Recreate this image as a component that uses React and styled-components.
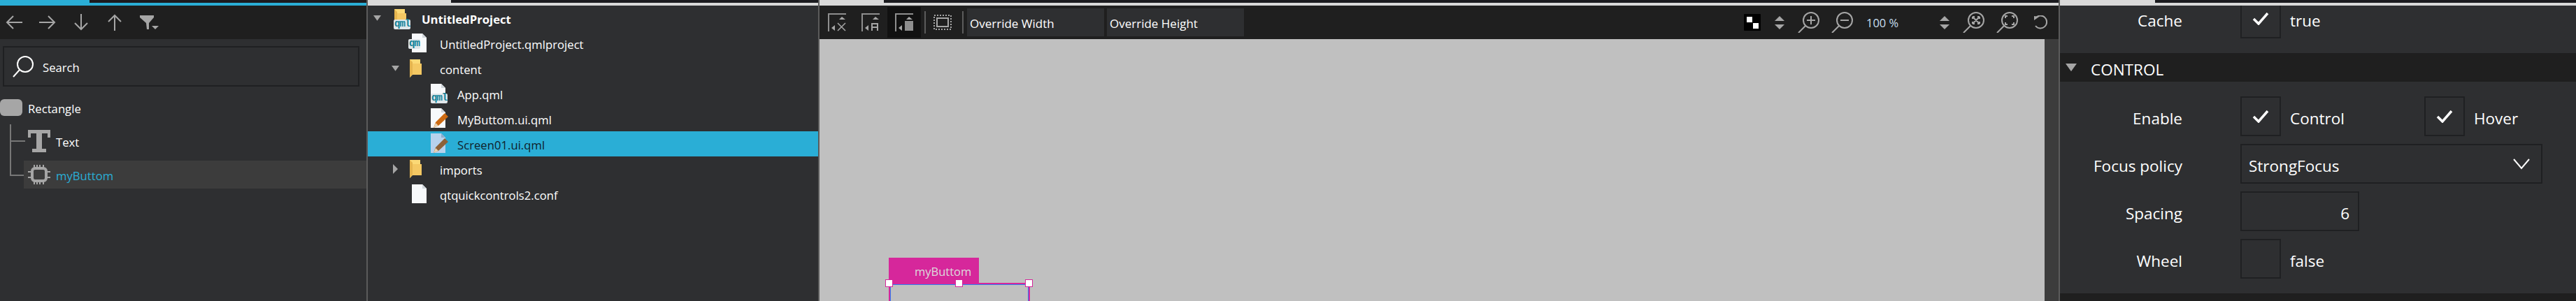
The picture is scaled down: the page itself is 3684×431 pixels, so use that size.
import React from 'react';
import styled, { createGlobalStyle } from 'styled-components';

const Global = createGlobalStyle`
  html, body { margin: 0; padding: 0; background: #2e2f31; overflow: hidden; }
  * { box-sizing: border-box; }
`;
const Shell = styled.div`
  display: flex; width: 3684px; height: 431px; overflow: hidden;
  font-family: "Open Sans", "Noto Sans", sans-serif; color: #fff; background: #2e2f31;
`;
const Panel = styled.section`
  flex: ${p => p.$width ? `0 0 ${p.$width}px` : '1'};
  display: flex; flex-direction: column; min-width: 0; height: 431px; overflow: hidden;
  border-right: ${p => p.$noBorder ? 'none' : '2px solid #5b5b5b'};
`;
const TabStrip = styled.div`
  flex: 0 0 8px; background: #1b1b1f; border-bottom: 4px solid ${p => p.$color};
`;
const Tab = styled.div`
  height: 4px; width: ${p => p.$width}px; background: ${p => p.$color};
`;
const NavToolbar = styled.div`
  flex: 0 0 48px; display: flex; align-items: center; gap: 24px; padding-left: 8px; background: #1f1f1f;
`;
const SearchBox = styled.div`
  height: 58px; width: 510px; margin: 10px 0 0 4px; border: 2px solid #1f2022;
  display: flex; align-items: center; gap: 11px; padding-left: 12px; font-size: 16.7px;
`;
const TreeLabel = styled.span`padding-top: 3px;`;
const NavTree = styled.div`
  position: relative; display: flex; flex-direction: column; margin-top: 18px;
`;
const TreeLine = styled.div`
  position: absolute; left: 14px; top: 36px; width: 20px; height: 74px;
  border-left: 2px solid #777;
  border-bottom: 2px solid #777;
  &::after { content: ''; position: absolute; left: 0; top: 23px; width: 20px; height: 2px; background: #777; }
`;
const NavRow = styled.div`
  display: flex; align-items: center; height: ${p => p.$h}px; margin-bottom: ${p => p.$mb || 0}px;
  margin-left: ${p => p.$indent || 0}px; padding-left: ${p => p.$pad || 0}px; gap: ${p => p.$gap || 8}px;
  font-size: 16.7px; background: ${p => p.$active ? '#3c3c3c' : 'transparent'};
  color: ${p => p.$active ? '#2aaed6' : '#fff'};
`;
const ProjectTree = styled.div`display: flex; flex-direction: column;`;
const ProjectRow = styled.div`
  display: flex; align-items: center; height: 36px; padding-left: ${p => p.$pad}px;
  background: ${p => p.$selected ? '#2aaed6' : 'transparent'};
  color: ${p => p.$selected ? '#10222b' : '#fff'};
  font-size: 16.7px; font-weight: ${p => p.$bold ? 700 : 400};
`;
const Disclosure = styled.span`
  flex: 0 0 26px; display: flex; justify-content: center;
`;
const IconSlot = styled.span`
  flex: 0 0 ${p => p.$w}px; padding-left: ${p => p.$pad || 0}px; display: flex; align-items: center;
`;
const CenterToolbar = styled.div`
  flex: 0 0 48px; display: flex; align-items: center; padding-left: 1px; background: #1f1f1f;
`;
const ToolButton = styled.div`
  flex: 0 0 48px; height: 44px; display: flex; align-items: center; justify-content: center;
  background: ${p => p.$active ? '#111111' : 'transparent'};
`;
const Separator = styled.div`
  flex: 0 0 2px; height: 32px; background: #5b5b5b; margin: 0 ${p => p.$r || 0}px 0 ${p => p.$l || 0}px;
`;
const OverrideInput = styled.div`
  flex: 0 0 196px; height: 40px; margin-right: 4px; background: #2e2f31; padding: 2px 0 0 4px;
  display: flex; align-items: center; font-size: 17px;
`;
const RightTools = styled.div`
  margin-left: auto; display: flex; align-items: center; padding-right: 16px;
`;
const Tool = styled.span`
  display: flex; margin-left: ${p => p.$before}px;
`;
const Percent = styled.span`
  margin-left: 19px; width: 48px; font-size: 16.5px; color: #c9dff0; white-space: nowrap;
`;
const Canvas = styled.div`flex: 1; display: flex; min-height: 0;`;
const Stage = styled.div`flex: 1; position: relative; background: #c0c0c0;`;
const ScrollTrack = styled.div`flex: 0 0 20px; background: #3c3c3c;`;
const ItemTag = styled.div`
  position: absolute; left: 99px; top: 313px; width: 129px; height: 36px; background: #d6279b;
  color: #dcdcdc; font-size: 16.5px; padding: 3px 0 0 37px; display: flex; align-items: center;
`;
const Selection = styled.div`
  position: absolute; left: 99px; top: 349px; width: 202px; height: 60px;
  border: 2px solid #d6279b;
  &::before { content: ''; position: absolute; inset: 0; border: 1px solid #2f7ef0; }
`;
const Handle = styled.span`
  position: absolute; top: -7px; left: ${p => p.$x}px; width: 11px; height: 11px;
  background: #fff; border: 1px solid #d6279b;
`;
const PropsBody = styled.div`flex: 1; overflow: hidden; position: relative;`;
const PropsScroll = styled.div`margin-top: -10px; display: flex; flex-direction: column;`;
const SectionHeader = styled.div`
  height: ${p => p.$h || 41}px; margin-top: ${p => p.$mt}px; background: #1f1f1f;
  display: flex; align-items: center; gap: 20px; padding-left: 8px; font-size: 22.5px;
`;
const SectionTitle = styled.span`padding-top: 6px;`;
const PropRow = styled.div`
  display: grid; grid-template-columns: 175px 1fr; column-gap: 83px; align-items: center;
  height: 57px; margin-top: ${p => p.$mt ?? 11}px; font-size: 22.5px;
`;
const PropLabel = styled.div`text-align: right; padding-top: 6px;`;
const FieldText = styled.span`padding-top: 5px;`;
const Inline = styled.div`display: flex; align-items: center;`;
const CheckField = styled.div`
  display: flex; align-items: center; gap: 13px; width: ${p => p.$w || 'auto'};
`;
const CheckBox = styled.div`
  width: 58px; height: 57px; border: 2px solid #1f2022; display: flex; align-items: center; justify-content: center;
`;
const Combo = styled.div`
  width: 432px; height: 57px; border: 2px solid #1f2022; display: flex; align-items: center;
  justify-content: space-between; padding: 0 16px 0 10px;
`;
const NumberField = styled.div`
  width: 170px; height: 57px; border: 2px solid #1f2022; display: flex; align-items: center;
  justify-content: flex-end; padding-right: 12px;
`;

const G = '#a6a6a6';
const Arrow = ({ d }) => (
  <svg width="24" height="24" viewBox="0 0 24 24" fill="none" stroke={G} strokeWidth="2"><path d={d} /></svg>
);
const Filter = () => (
  <svg width="28" height="24" viewBox="0 0 28 24"><path d="M0 2H20V5L13 13V22L10 22 9 13 0 5Z" fill={G} /><path d="M17 17H27L22 22Z" fill={G} /></svg>
);
const SearchIcon = () => (
  <svg width="32" height="32" viewBox="0 0 32 32" fill="none" stroke="#fff" strokeWidth="2"><circle cx="18" cy="13" r="11" /><path d="M10 21L1 31" /></svg>
);
const RectIcon = () => (
  <svg width="32" height="24" viewBox="0 0 32 24" style={{ display: 'block' }}><rect width="32" height="24" rx="6" fill={G} /></svg>
);
const TIcon = () => (
  <svg width="32" height="32" viewBox="0 0 32 32"><path d="M0 0H32V11H28V5H20V27H26V32H6V27H12V5H4V11H0Z" fill={G} /></svg>
);
const ChipIcon = () => (
  <svg width="32" height="28" viewBox="0 0 32 28" fill="none" stroke={G}>
    <rect x="6" y="5" width="20" height="18" rx="4" strokeWidth="4" />
    <path d="M9 0V4M13 0V4M17 0V4M22 0V4M9 24V28M13 24V28M17 24V28M22 24V28M0 10H4M0 18H4M28 10H32M28 18H32" strokeWidth="2" />
  </svg>
);
const TriDown = ({ size = 11, c = G }) => (
  <svg width={size} height={size * 0.7} viewBox="0 0 10 7"><path d="M0 0H10L5 7Z" fill={c} /></svg>
);
const TriRight = () => (
  <svg width="7" height="14" viewBox="0 0 7 14"><path d="M0 0L7 7L0 14Z" fill={G} /></svg>
);
const Folder = ({ w = 20 }) => (
  <svg width={w} height="28" viewBox="0 0 20 28" style={{ display: 'block' }}>
    <path d="M1 1H16V23H5L1 27Z" fill="#fbd976" /><path d="M5 7L18 7V23H5Z" fill="#f4c863" /><path d="M1 1L5 5V22L1 27Z" fill="#e6b54f" />
  </svg>
);
const QmlBadge = styled.span`
  position: absolute; left: ${p => p.$l}px; bottom: ${p => p.$b}px; background: #dfe6ea; color: #128298;
  font: 700 14px/12px "Liberation Mono", monospace; padding: 0 1px 2px; letter-spacing: -1px; border-radius: 2px;
`;
const IconStack = styled.span`position: relative; display: block; width: ${p => p.$w}px; height: 28px;`;
const FileSheet = ({ tint = '#f7f9fb', fold = '#cfd5da' }) => (
  <svg width="22" height="28" viewBox="0 0 22 28" style={{ display: 'block' }}>
    <path d="M0 0H15L21 6V27H0Z" fill={tint} /><path d="M15 0L21 6H15Z" fill={fold} />
  </svg>
);
const PencilFile = ({ selected }) => (
  <svg width="26" height="30" viewBox="0 0 26 30" style={{ display: 'block' }}>
    <path d="M0 0H15L21 6V28H0Z" fill={selected ? '#b7d2ed' : '#f7f9fb'} /><path d="M15 0L21 6H15Z" fill={selected ? '#8eaecd' : '#cfd5da'} />
    <path d="M4 28L7 20L20 7L25 12L11 25Z" fill={selected ? '#8c6239' : '#cc6a12'} /><path d="M4 28L7 21L11 25Z" fill="#e9d3b5" />
  </svg>
);
const Check = () => (
  <svg width="24" height="18" viewBox="0 0 24 18" fill="none" stroke="#fff" strokeWidth="3.5"><path d="M2 9L9 16L22 1" /></svg>
);
const Chevron = () => (
  <svg width="24" height="16" viewBox="0 0 24 16" fill="none" stroke="#fff" strokeWidth="2"><path d="M1 1L12 14L23 1" /></svg>
);
const Align = ({ children }) => (
  <svg width="26" height="26" viewBox="0 0 26 26" fill="none">
    <path d="M1 26V1H26" stroke="#8e8e8e" strokeWidth="2" />
    <path d="M16 9L20 5L25 9Z" fill={G} /><path d="M10 17V25L5 21Z" fill={G} />
    {children}
  </svg>
);
const Dotted = () => (
  <svg width="26" height="22" viewBox="0 0 26 22" fill="none" stroke={G}>
    <rect x="1" y="1" width="24" height="20" strokeWidth="2" strokeDasharray="2 2" />
    <rect x="5" y="5" width="16" height="12" strokeWidth="2" />
  </svg>
);
const Checker = () => (
  <svg width="24" height="24" viewBox="0 0 24 24"><rect width="24" height="24" rx="1" fill="#000" /><rect x="4" y="4" width="8" height="8" fill="#fff" /><rect x="13" y="13" width="8" height="8" fill="#fff" /></svg>
);
const UpDown = () => (
  <svg width="14" height="19" viewBox="0 0 14 19"><path d="M7 0L14 7H0Z" fill={G} /><path d="M0 12H14L7 19Z" fill={G} /></svg>
);
const Zoom = ({ children }) => (
  <svg width="31" height="30" viewBox="0 0 31 30" fill="none" stroke={G} strokeWidth="2">
    <circle cx="19" cy="12" r="11" /><path d="M11 20L1 30" />{children}
  </svg>
);
const Undo = () => (
  <svg width="20" height="20" viewBox="0 0 20 20" fill="none" stroke={G} strokeWidth="2">
    <path d="M3 4A9 9 0 1 1 3 15" /><path d="M1 1L8 2L1 7Z" fill={G} stroke="none" />
  </svg>
);

export default function App() {
  return (
    <Shell>
      <Global />
      <Panel $width={526}>
        <TabStrip $color="#2aaed6"><Tab $width={128} $color="#2aaed6" /></TabStrip>
        <NavToolbar>
          <Arrow d="M24 12H2M11 3L2 12L11 21" />
          <Arrow d="M0 12H22M13 3L22 12L13 21" />
          <Arrow d="M12 0V22M3 13L12 22L21 13" />
          <Arrow d="M12 24V2M3 11L12 2L21 11" />
          <Filter />
        </NavToolbar>
        <SearchBox><SearchIcon /><TreeLabel>Search</TreeLabel></SearchBox>
        <NavTree>
          <TreeLine />
          <NavRow $h={24} $mb={12} $gap={8}><RectIcon /><TreeLabel>Rectangle</TreeLabel></NavRow>
          <NavRow $h={48} $mb={4} $indent={34} $pad={6}><TIcon /><TreeLabel>Text</TreeLabel></NavRow>
          <NavRow $h={40} $indent={34} $pad={6} $active><ChipIcon /><TreeLabel>myButtom</TreeLabel></NavRow>
        </NavTree>
      </Panel>

      <Panel $width={646}>
        <TabStrip $color="#d9d9d9"><Tab $width={119} $color="#d9d9d9" /></TabStrip>
        <ProjectTree>
          <ProjectRow $pad={0} $bold>
            <Disclosure><TriDown /></Disclosure>
            <IconSlot $w={51} $pad={11}><IconStack $w={28}><Folder /><QmlBadge $l={0} $b={-2}>qml</QmlBadge></IconStack></IconSlot>
            <TreeLabel>UntitledProject</TreeLabel>
          </ProjectRow>
          <ProjectRow $pad={63}>
            <IconSlot $w={40}><IconStack $w={30}><FileSheet /><QmlBadge $l={-5} $b={6}>qm</QmlBadge></IconStack></IconSlot>
            <TreeLabel>UntitledProject.qmlproject</TreeLabel>
          </ProjectRow>
          <ProjectRow $pad={26}>
            <Disclosure><TriDown /></Disclosure>
            <IconSlot $w={51} $pad={7}><Folder /></IconSlot>
            <TreeLabel>content</TreeLabel>
          </ProjectRow>
          <ProjectRow $pad={90}>
            <IconSlot $w={38}><IconStack $w={28}><FileSheet /><QmlBadge $l={0} $b={0}>qml</QmlBadge></IconStack></IconSlot>
            <TreeLabel>App.qml</TreeLabel>
          </ProjectRow>
          <ProjectRow $pad={90}>
            <IconSlot $w={38}><PencilFile /></IconSlot>
            <TreeLabel>MyButtom.ui.qml</TreeLabel>
          </ProjectRow>
          <ProjectRow $pad={90} $selected>
            <IconSlot $w={38}><PencilFile selected /></IconSlot>
            <TreeLabel>Screen01.ui.qml</TreeLabel>
          </ProjectRow>
          <ProjectRow $pad={26}>
            <Disclosure><TriRight /></Disclosure>
            <IconSlot $w={51} $pad={7}><Folder /></IconSlot>
            <TreeLabel>imports</TreeLabel>
          </ProjectRow>
          <ProjectRow $pad={63}>
            <IconSlot $w={40}><FileSheet /></IconSlot>
            <TreeLabel>qtquickcontrols2.conf</TreeLabel>
          </ProjectRow>
        </ProjectTree>
      </Panel>

      <Panel $width={1774}>
        <TabStrip $color="#d9d9d9"><Tab $width={92} $color="#d9d9d9" /></TabStrip>
        <CenterToolbar>
          <ToolButton><Align><path d="M14 14L25 25M25 14L14 25" stroke={G} strokeWidth="1.5" /></Align></ToolButton>
          <ToolButton><Align><path d="M15 25V15H23V25M15 20H23" stroke={G} strokeWidth="2" /></Align></ToolButton>
          <ToolButton $active><Align><rect x="14" y="11" width="12" height="14" fill="#8e8e8e" /></Align></ToolButton>
          <Separator $l={5} />
          <ToolButton><Dotted /></ToolButton>
          <Separator $l={4} $r={5} />
          <OverrideInput>Override Width</OverrideInput>
          <OverrideInput>Override Height</OverrideInput>
          <RightTools>
            <Tool $before={0}><Checker /></Tool>
            <Tool $before={20}><UpDown /></Tool>
            <Tool $before={19}><Zoom><path d="M19 6V18M13 12H25" /></Zoom></Tool>
            <Tool $before={17}><Zoom><path d="M13 12H25" /></Zoom></Tool>
            <Percent>100 %</Percent>
            <Tool $before={57}><UpDown /></Tool>
            <Tool $before={19}><Zoom><path d="M14 7L24 17M24 7L14 17M14 7H17M14 7V10M24 17H21M24 17V14M24 7H21M24 7V10M14 17H17M14 17V14" /></Zoom></Tool>
            <Tool $before={17}><Zoom><path d="M13 9V6H16M22 6H25V9M25 15V18H22M16 18H13V15" /></Zoom></Tool>
            <Tool $before={22}><Undo /></Tool>
          </RightTools>
        </CenterToolbar>
        <Canvas>
          <Stage>
            <ItemTag>myButtom</ItemTag>
            <Selection>
              <Handle $x={-7} />
              <Handle $x={93} />
              <Handle $x={193} />
            </Selection>
          </Stage>
          <ScrollTrack />
        </Canvas>
      </Panel>

      <Panel $noBorder>
        <TabStrip $color="#d9d9d9"><Tab $width={136} $color="#d9d9d9" /></TabStrip>
        <PropsBody>
          <PropsScroll>
            <PropRow $mt={0}>
              <PropLabel>Cache</PropLabel>
              <CheckField><CheckBox><Check /></CheckBox><FieldText>true</FieldText></CheckField>
            </PropRow>
            <SectionHeader $mt={21}><TriDown size={16} /><SectionTitle>CONTROL</SectionTitle></SectionHeader>
            <PropRow $mt={21}>
              <PropLabel>Enable</PropLabel>
              <Inline>
                <CheckField $w="263px"><CheckBox><Check /></CheckBox><FieldText>Control</FieldText></CheckField>
                <CheckField><CheckBox><Check /></CheckBox><FieldText>Hover</FieldText></CheckField>
              </Inline>
            </PropRow>
            <PropRow>
              <PropLabel>Focus policy</PropLabel>
              <Combo><FieldText>StrongFocus</FieldText><Chevron /></Combo>
            </PropRow>
            <PropRow>
              <PropLabel>Spacing</PropLabel>
              <NumberField><FieldText>6</FieldText></NumberField>
            </PropRow>
            <PropRow>
              <PropLabel>Wheel</PropLabel>
              <CheckField><CheckBox /><FieldText>false</FieldText></CheckField>
            </PropRow>
            <SectionHeader $mt={21} $h={30} />
          </PropsScroll>
        </PropsBody>
      </Panel>
    </Shell>
  );
}
